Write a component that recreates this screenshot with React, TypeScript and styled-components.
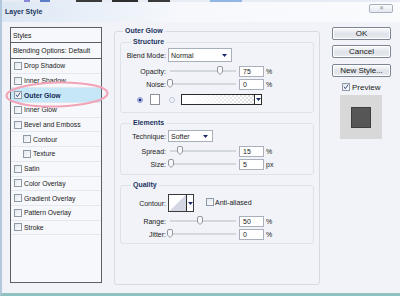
import styled, { createGlobalStyle } from "styled-components";

const GlobalStyle = createGlobalStyle`
  html, body {
    margin: 0;
    padding: 0;
    background: #f1f3f8;
  }
  body {
    font-family: "Liberation Sans", Arial, sans-serif;
    color: #1b1b1b;
  }
`;

interface StyleItem {
  label: string;
  checked?: boolean;
  active?: boolean;
  indent?: boolean;
}

const styleItems: StyleItem[] = [
  { label: "Drop Shadow" },
  { label: "Inner Shadow" },
  { label: "Outer Glow", checked: true, active: true },
  { label: "Inner Glow" },
  { label: "Bevel and Emboss" },
  { label: "Contour", indent: true },
  { label: "Texture", indent: true },
  { label: "Satin" },
  { label: "Color Overlay" },
  { label: "Gradient Overlay" },
  { label: "Pattern Overlay" },
  { label: "Stroke" },
];

function Arrow() {
  return (
    <svg width="5" height="3" viewBox="0 0 5 3">
      <path d="M0 0 H5 L2.5 3 Z" fill="#1b2a6b" />
    </svg>
  );
}

function CheckMark() {
  return (
    <svg width="8" height="8" viewBox="0 0 8 8">
      <path
        d="M1.5 3.8 L3.2 6.3 L6.8 0.8"
        fill="none"
        stroke="#1f2f7a"
        strokeWidth="1.1"
      />
    </svg>
  );
}

function Slider({ value }: { value: number }) {
  return (
    <SliderTrack>
      <Thumb style={{ left: `${value}%` }}>
        <svg width="6" height="9" viewBox="0 0 6 9">
          <path
            d="M0.5 2 Q0.5 0.5 2 0.5 H4 Q5.5 0.5 5.5 2 V6 L3 8.5 L0.5 6 Z"
            fill="#f7f8fa"
            stroke="#868b94"
            strokeWidth="0.9"
          />
        </svg>
      </Thumb>
    </SliderTrack>
  );
}

function SliderRow({
  label,
  value,
  pos,
  unit,
}: {
  label: string;
  value: string;
  pos: number;
  unit: string;
}) {
  return (
    <Row>
      <Label>{label}</Label>
      <Slider value={pos} />
      <NumberBox>{value}</NumberBox>
      <Unit>{unit}</Unit>
    </Row>
  );
}

export default function App() {
  return (
    <Window>
      <GlobalStyle />
      <DesktopStrip />
      <TitleBar>
        <Title>Layer Style</Title>
        <CloseButton>✕</CloseButton>
      </TitleBar>

      <Body>
        <StylesList>
          <HeaderRow>Styles</HeaderRow>
          <HeaderRow $tall>Blending Options: Default</HeaderRow>
          {styleItems.map((item) => (
            <StyleRow key={item.label} $active={item.active} $indent={item.indent}>
              <Checkbox>{item.checked && <CheckMark />}</Checkbox>
              <span>{item.label}</span>
            </StyleRow>
          ))}
        </StylesList>

        <OuterBox>
          <OuterLegend>Outer Glow</OuterLegend>

          <GroupBox $pt={2} $pb={7}>
            <GroupLegend>Structure</GroupLegend>
            <Row $h={14}>
              <Label>Blend Mode:</Label>
              <Select $w={64}>
                Normal
                <Arrow />
              </Select>
            </Row>
            <SliderRow label="Opacity:" value="75" pos={75} unit="%" />
            <SliderRow label="Noise:" value="0" pos={0} unit="%" />
            <ColorRow>
              <Radio $on />
              <Swatch />
              <Radio />
              <GradientBox>
                <DropStrip>
                  <Arrow />
                </DropStrip>
              </GradientBox>
            </ColorRow>
          </GroupBox>

          <GroupBox $pt={3} $pb={4}>
            <GroupLegend>Elements</GroupLegend>
            <Row $h={12}>
              <Label>Technique:</Label>
              <Select $w={45}>
                Softer
                <Arrow />
              </Select>
            </Row>
            <SliderRow label="Spread:" value="15" pos={15} unit="%" />
            <SliderRow label="Size:" value="5" pos={2} unit="px" />
          </GroupBox>

          <GroupBox $pt={5} $pb={3}>
            <GroupLegend>Quality</GroupLegend>
            <Row $h={18}>
              <Label>Contour:</Label>
              <ContourPicker>
                <ContourCurve />
                <DropStrip>
                  <Arrow />
                </DropStrip>
              </ContourPicker>
              <AntiAlias>
                <Checkbox />
                <span>Anti-aliased</span>
              </AntiAlias>
            </Row>
            <SliderRow label="Range:" value="50" pos={46} unit="%" />
            <SliderRow label="Jitter:" value="0" pos={0} unit="%" />
          </GroupBox>
        </OuterBox>

        <SideColumn>
          <DialogButton>OK</DialogButton>
          <DialogButton $mt={5}>Cancel</DialogButton>
          <DialogButton $mt={6}>New Style...</DialogButton>
          <PreviewToggle>
            <Checkbox>
              <CheckMark />
            </Checkbox>
            <span>Preview</span>
          </PreviewToggle>
          <PreviewTile>
            <PreviewSquare />
          </PreviewTile>
        </SideColumn>
      </Body>

      <Annotation width="106" height="30" viewBox="0 0 106 30">
        <ellipse
          cx="53"
          cy="14.5"
          rx="50.5"
          ry="12"
          transform="rotate(-1.5 53 14.5)"
          fill="none"
          stroke="#f2a3b6"
          strokeWidth="2"
        />
      </Annotation>
    </Window>
  );
}

const Window = styled.div`
  position: relative;
  width: 400px;
  height: 296px;
  box-sizing: border-box;
  background: #f1f3f8;
  border-left: 2px solid #b3c8dc;
  border-bottom: 3px solid #8fc2c0;
  display: flex;
  flex-direction: column;
  overflow: hidden;
`;

const DesktopStrip = styled.div`
  height: 2px;
  background: linear-gradient(
    to right,
    #e8ecf4 0 22px,
    #8a86d8 22px 28px,
    #e8ecf4 28px 38px,
    #5a7ec8 38px 48px,
    #e8ecf4 48px 74px,
    #3a3a3a 74px 100px,
    #e8ecf4 100px 110px,
    #2e2e2e 110px 136px,
    #e8ecf4 136px 146px,
    #3a3a3a 146px 168px,
    #e8ecf4 168px 208px,
    #8fb6e6 208px 240px,
    #e8ecf4 240px
  );
`;

const TitleBar = styled.div`
  height: 20px;
  display: flex;
  justify-content: space-between;
  align-items: flex-start;
  padding: 0 7px 0 3px;
  background: linear-gradient(to right, #dce7f4, #f6f8fc 45%, #fafbfd);
`;

const Title = styled.span`
  margin-top: 6px;
  font-size: 7px;
  font-weight: bold;
  color: #1c365f;
`;

const CloseButton = styled.div`
  margin-top: 2px;
  width: 24px;
  height: 9px;
  box-sizing: border-box;
  border: 1px solid #a9b0bd;
  border-radius: 2px;
  background: linear-gradient(#fbfcfd, #e4e8ee);
  color: #8a8f98;
  font-size: 6px;
  line-height: 7px;
  text-align: center;
`;

const Body = styled.div`
  flex: 1;
  display: flex;
  align-items: flex-start;
  padding: 5px 0 0 8px;
`;

const StylesList = styled.div`
  width: 92px;
  height: 256px;
  box-sizing: border-box;
  border: 1px solid #5c5f66;
  background: #f7f8fb;
  display: flex;
  flex-direction: column;
`;

const HeaderRow = styled.div<{ $tall?: boolean }>`
  height: ${(p) => (p.$tall ? 15 : 14)}px;
  border-bottom: 1px solid #5c5f66;
  display: flex;
  align-items: center;
  padding-left: 2px;
  font-size: 6.8px;
`;

const StyleRow = styled.div<{ $active?: boolean; $indent?: boolean }>`
  height: 14.7px;
  box-sizing: border-box;
  border-bottom: 1px solid #e4e7ed;
  display: flex;
  align-items: center;
  gap: 2px;
  padding-left: ${(p) => (p.$indent ? 12 : 3)}px;
  background: ${(p) => (p.$active ? "#c6e7f8" : "transparent")};
  font-size: 6.8px;
  font-weight: ${(p) => (p.$active ? "bold" : "normal")};
  color: ${(p) => (p.$active ? "#142a52" : "#1b1b1b")};
`;

const Checkbox = styled.span`
  width: 8px;
  height: 8px;
  box-sizing: border-box;
  border: 1px solid #8f9aa8;
  background: linear-gradient(135deg, #e4e8ee, #fbfcfd);
  display: inline-flex;
  align-items: center;
  justify-content: center;
  flex-shrink: 0;
  & svg {
    margin-top: -1px;
  }
`;

const OuterBox = styled.fieldset`
  margin: 0 0 0 12px;
  padding: 3px 5px 0 5px;
  width: 206px;
  height: 258px;
  box-sizing: border-box;
  border: 1px solid #d6dae2;
  border-radius: 3px;
  display: flex;
  flex-direction: column;
  gap: 6px;
`;

const OuterLegend = styled.legend`
  margin-left: 3px;
  padding: 0 2px;
  font-size: 7px;
  line-height: 8px;
  font-weight: bold;
  color: #1d3461;
`;

const GroupBox = styled.fieldset<{ $pt: number; $pb: number }>`
  margin: 0;
  padding: ${(p) => p.$pt}px 0 ${(p) => p.$pb}px 0;
  border: 1px solid #dde1e8;
  border-radius: 3px;
  display: flex;
  flex-direction: column;
  gap: 2px;
  & > div:nth-of-type(2) {
    margin-top: 2px;
  }
`;

const GroupLegend = styled.legend`
  margin-left: 10px;
  padding: 0 2px;
  font-size: 7px;
  line-height: 8px;
  font-weight: bold;
  color: #1d3461;
`;

const Row = styled.div<{ $h?: number }>`
  height: ${(p) => p.$h ?? 11}px;
  display: flex;
  align-items: center;
  font-size: 7px;
`;

const Label = styled.span`
  width: 45px;
  margin-right: 2px;
  text-align: right;
  flex-shrink: 0;
  color: #222;
`;

const Select = styled.div<{ $w: number }>`
  width: ${(p) => p.$w}px;
  height: 100%;
  box-sizing: border-box;
  border: 1px solid #a7afbb;
  background: #fff;
  display: flex;
  align-items: center;
  justify-content: space-between;
  padding: 0 4px 0 2px;
  font-size: 7px;
`;

const SliderTrack = styled.div`
  position: relative;
  width: 66px;
  height: 2px;
  margin: 0 3px 0 2px;
  background: #d3d7de;
  border-bottom: 1px solid #f4f5f8;
`;

const Thumb = styled.span`
  position: absolute;
  top: -4px;
  margin-left: -3px;
  display: flex;
`;

const NumberBox = styled.div`
  width: 25px;
  height: 11px;
  box-sizing: border-box;
  border: 1px solid #a9b0bc;
  background: #fff;
  padding-left: 3px;
  font-size: 7px;
  line-height: 9px;
`;

const Unit = styled.span`
  margin-left: 2px;
  font-size: 7px;
`;

const ColorRow = styled.div`
  height: 11px;
  display: flex;
  align-items: center;
  padding-left: 16px;
  margin-top: 2px;
`;

const Radio = styled.span<{ $on?: boolean }>`
  width: 6px;
  height: 6px;
  box-sizing: border-box;
  border-radius: 50%;
  border: 1px solid ${(p) => (p.$on ? "#8c96c8" : "#bcc6d6")};
  background: ${(p) =>
    p.$on ? "radial-gradient(circle, #1a2a8a 45%, #dfe4f4 60%)" : "#f3f5fa"};
`;

const Swatch = styled.span`
  width: 10px;
  height: 11px;
  box-sizing: border-box;
  margin: 0 9px 0 7px;
  border: 1px solid #8a8f98;
  background: #fff;
`;

const GradientBox = styled.div`
  width: 81px;
  height: 11px;
  box-sizing: border-box;
  margin-left: 6px;
  border: 1px solid #2b2b2b;
  display: flex;
  justify-content: flex-end;
  background:
    linear-gradient(to right, #fff 10%, rgba(255, 255, 255, 0.2) 95%),
    repeating-conic-gradient(#cfcfcf 0 25%, #fff 0 50%) 0 0 / 4px 4px;
`;

const DropStrip = styled.span`
  width: 6px;
  border-left: 1px solid #2b2b2b;
  background: #fff;
  display: flex;
  align-items: center;
  justify-content: center;
`;

const ContourPicker = styled.div`
  height: 18px;
  display: flex;
  border: 1px solid #3a3a3a;
  box-sizing: border-box;
`;

const ContourCurve = styled.span`
  width: 17px;
  background: linear-gradient(to top left, #d4d8e4 50%, #fff 50%);
`;

const AntiAlias = styled.div`
  margin-left: 12px;
  display: flex;
  align-items: center;
  gap: 1px;
  margin-top: -2px;
  font-size: 7px;
`;

const SideColumn = styled.div`
  width: 59px;
  margin-left: 12px;
  display: flex;
  flex-direction: column;
`;

const DialogButton = styled.div<{ $mt?: number }>`
  height: 13px;
  margin-top: ${(p) => p.$mt ?? 0}px;
  box-sizing: border-box;
  border: 1px solid #7c8595;
  border-radius: 2px;
  background: linear-gradient(#fafbfc, #dfe3e9 55%, #e9ecf0);
  box-shadow: inset 0 0 0 1px #fff;
  font-size: 8px;
  line-height: 11px;
  text-align: center;
  color: #222;
`;

const PreviewToggle = styled.div`
  height: 10px;
  margin-top: 5px;
  padding-left: 10px;
  display: flex;
  align-items: center;
  gap: 2px;
  font-size: 8px;
`;

const PreviewTile = styled.div`
  width: 42px;
  height: 44px;
  margin: 3px 0 0 8px;
  background: #d8d8d8;
  display: flex;
  align-items: center;
  justify-content: center;
`;

const PreviewSquare = styled.div`
  width: 20px;
  height: 21px;
  box-sizing: border-box;
  border: 1px solid #3e3e3e;
  background: #565656;
`;

const Annotation = styled.svg`
  position: absolute;
  left: 2px;
  top: 80px;
  pointer-events: none;
`;
